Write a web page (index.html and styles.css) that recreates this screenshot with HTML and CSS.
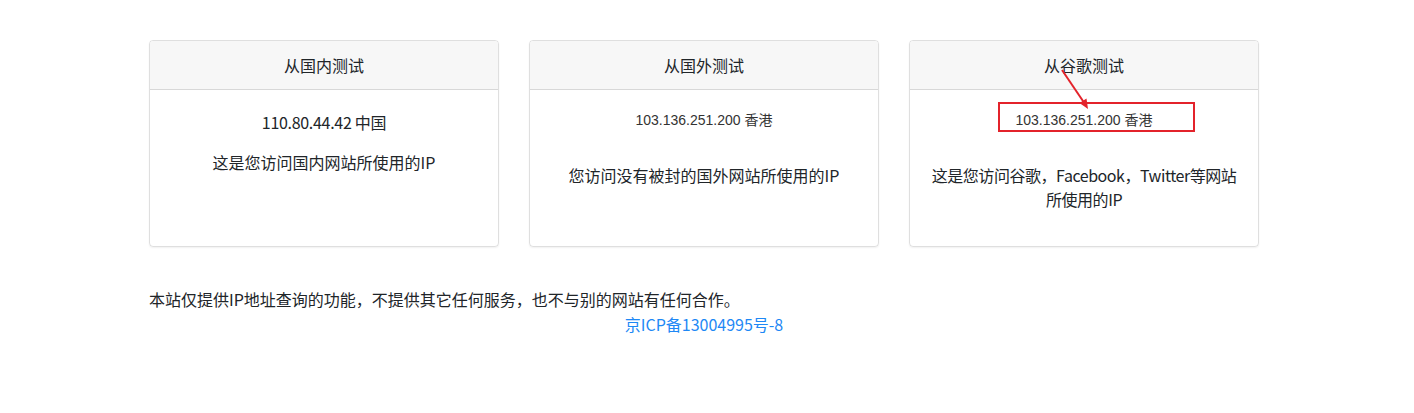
FILE: index.html
```html
<!DOCTYPE html>
<html lang="zh-CN">
<head>
<meta charset="utf-8">
<title>IP查询</title>
<link rel="stylesheet" href="styles.css">
</head>
<body>
<div class="page">
  <div class="cards">
    <div class="card">
      <div class="card-header">从国内测试</div>
      <div class="card-body">
        <p class="ip-cn">110.80.44.42 中国</p>
        <p class="desc">这是您访问国内网站所使用的IP</p>
      </div>
    </div>
    <div class="card">
      <div class="card-header">从国外测试</div>
      <div class="card-body">
        <div class="ip">103.136.251.200 香港</div>
        <p class="desc desc-gap">您访问没有被封的国外网站所使用的IP</p>
      </div>
    </div>
    <div class="card card-annotated">
      <div class="card-header">从谷歌测试</div>
      <div class="card-body">
        <div class="ip">103.136.251.200 香港</div>
        <p class="desc desc-gap desc-tight">这是您访问谷歌，Facebook，Twitter等网站所使用的IP</p>
      </div>
      <div class="mark-box"></div>
      <svg class="mark-arrow" width="40" height="50" viewBox="0 0 40 50">
        <line x1="4" y1="3" x2="27" y2="37" stroke="#e3232b" stroke-width="2"/>
        <polygon points="30,42 21.5,36 28.5,31.5" fill="#e3232b"/>
      </svg>
    </div>
  </div>
  <p class="note">本站仅提供IP地址查询的功能，不提供其它任何服务，也不与别的网站有任何合作。</p>
  <div class="icp"><a href="#">京ICP备13004995号-8</a></div>
</div>
</body>
</html>
```

FILE: styles.css
```css
html, body {
  margin: 0;
  padding: 0;
  background: #fff;
}
body {
  font-family: "Noto Sans CJK SC", "Noto Sans", sans-serif;
  font-size: 16px;
  line-height: 1.5;
  color: #212529;
}
.page {
  width: 1110px;
  margin-left: 149px;
  padding-top: 40px;
}
.cards {
  display: flex;
  gap: 30px;
}
.card {
  position: relative;
  width: 350px;
  height: 207px;
  box-sizing: border-box;
  border: 1px solid rgba(0, 0, 0, 0.125);
  border-radius: 4px;
  box-shadow: 0 1px 2px rgba(0, 0, 0, 0.06);
  display: flex;
  flex-direction: column;
  text-align: center;
}
.card-header {
  height: 49px;
  box-sizing: border-box;
  padding: 12px 20px;
  background: #f7f7f7;
  border-bottom: 1px solid rgba(0, 0, 0, 0.125);
  border-radius: 3px 3px 0 0;
  line-height: 24px;
}
.card-body {
  padding: 20px;
}
.card-body p {
  margin: 0 0 16px;
}
.ip-cn {
  letter-spacing: -0.3px;
}
.ip {
  font-family: "Liberation Sans", Arial, "Noto Sans CJK SC", sans-serif;
  font-size: 14px;
  line-height: 21px;
  color: #333;
}
.desc-gap {
  margin-top: 32px !important;
}
.desc-tight {
  letter-spacing: -0.45px;
}
.mark-box {
  position: absolute;
  left: 88px;
  top: 61px;
  width: 197px;
  height: 30px;
  box-sizing: border-box;
  border: 2px solid #e3232b;
}
.mark-arrow {
  position: absolute;
  left: 148px;
  top: 26px;
}
.note {
  margin: 40px 0 0;
  font-size: 16px;
  line-height: 24px;
}
.icp {
  text-align: center;
  font-size: 16px;
  line-height: 24px;
  margin-top: 1px;
}
.icp a {
  color: #1e88f5;
  text-decoration: none;
}
```
